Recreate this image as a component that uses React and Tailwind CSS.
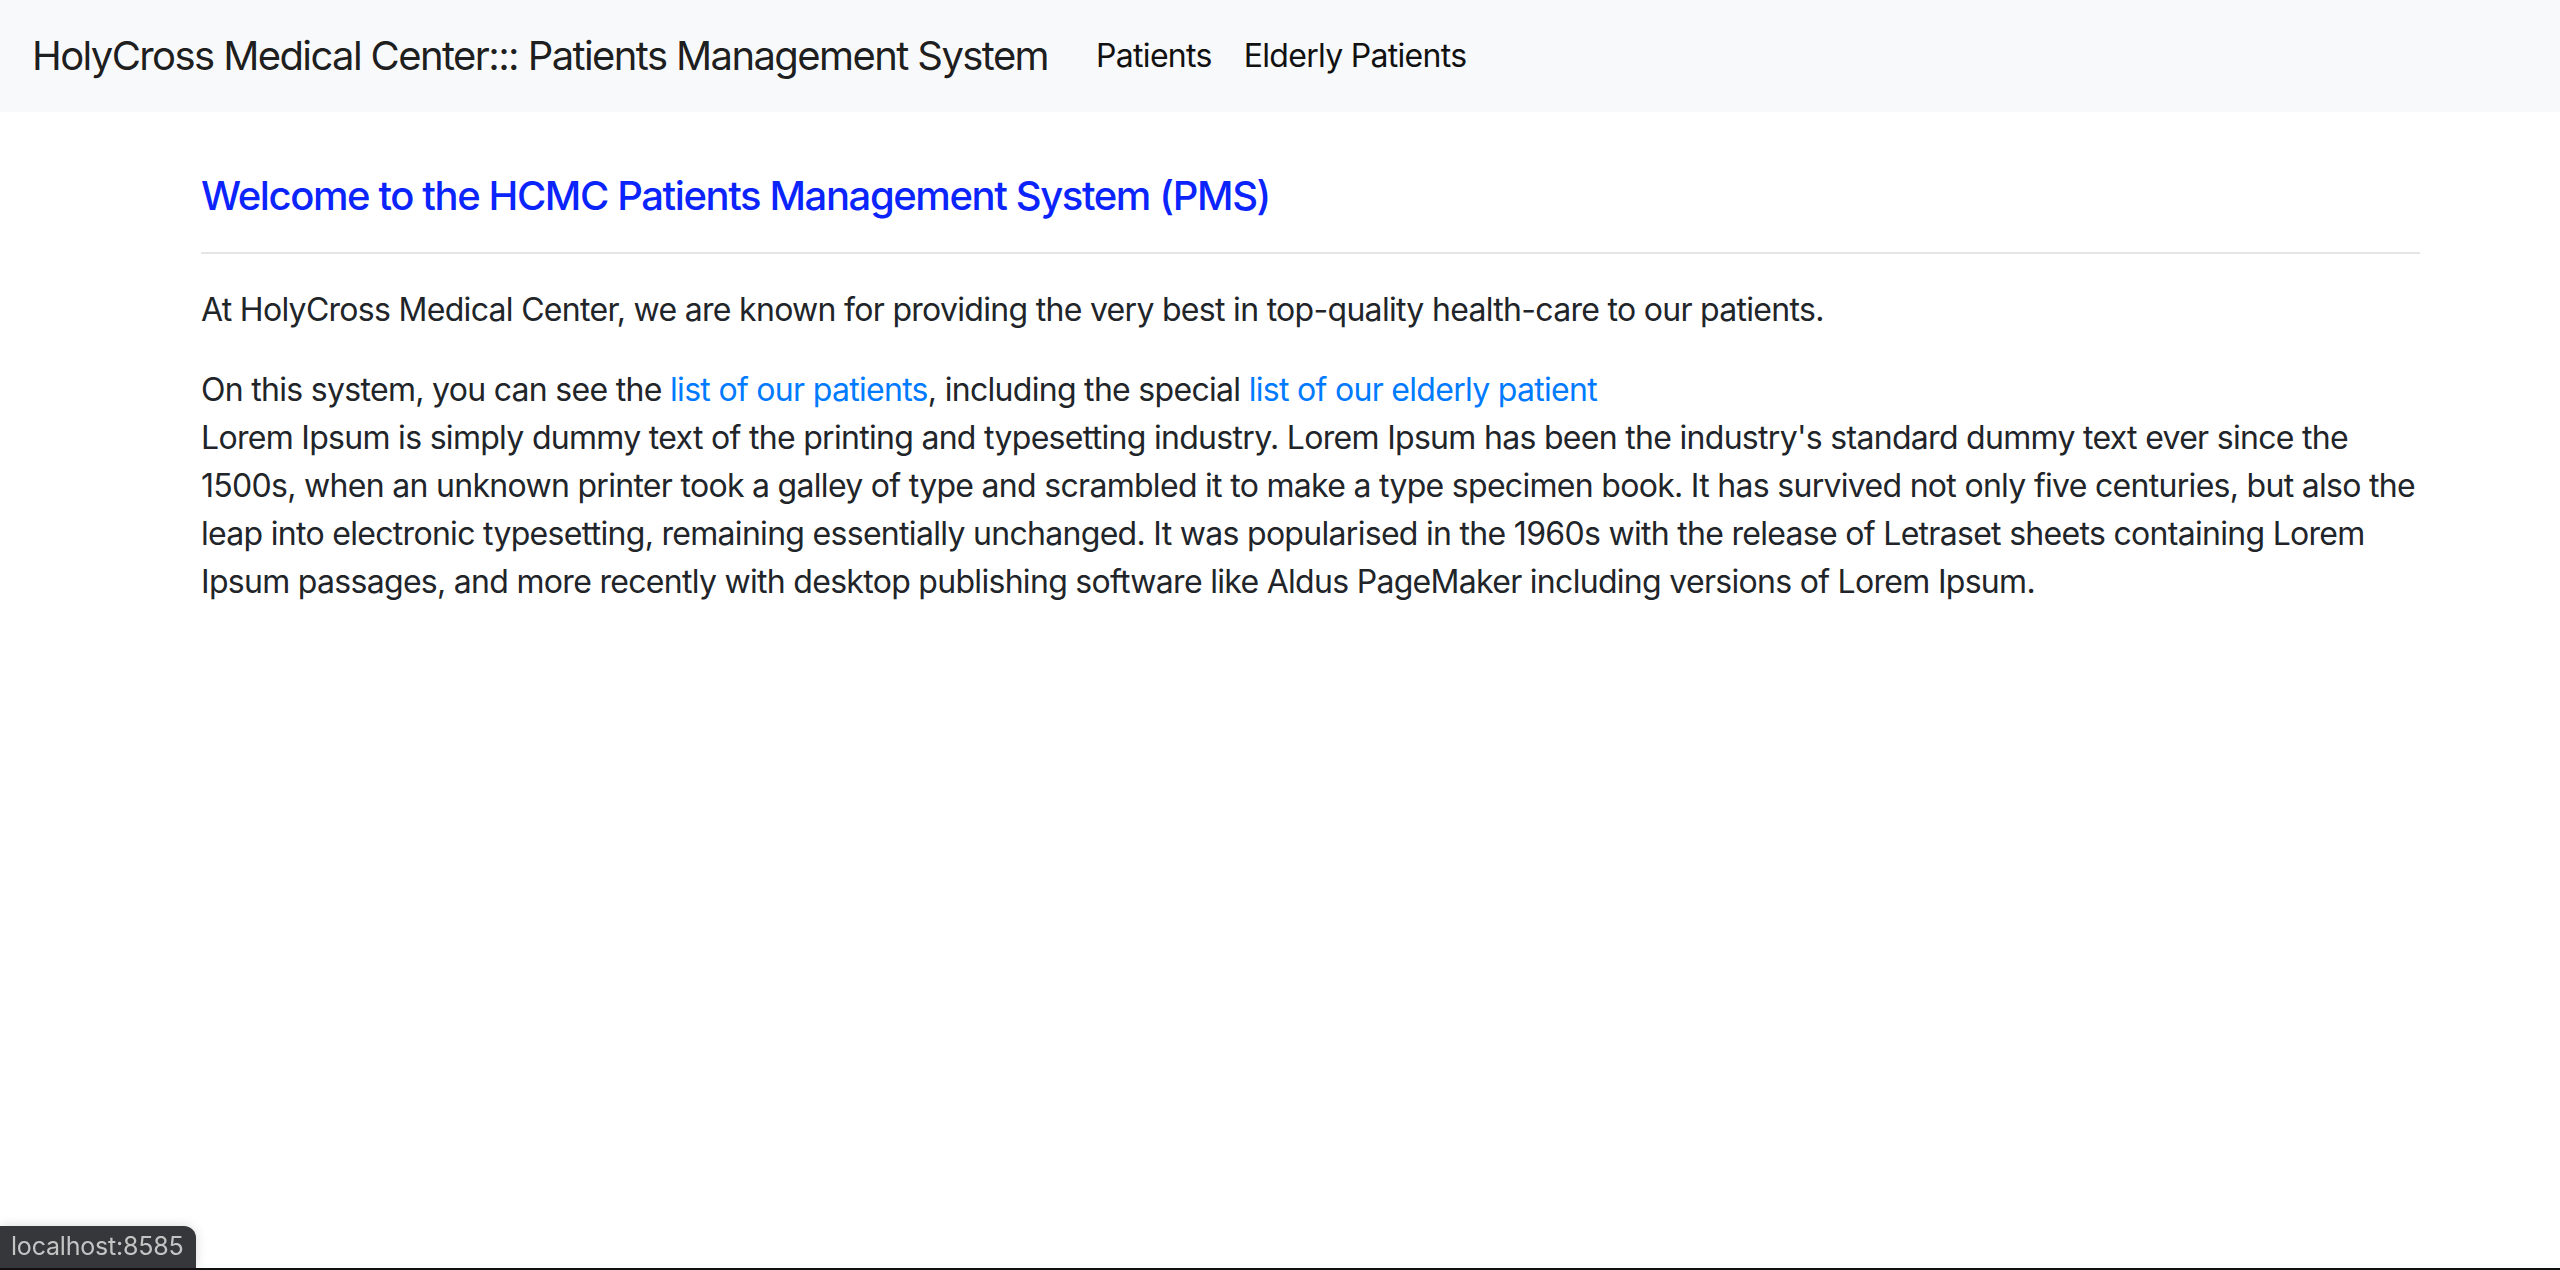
import React from "react";

const NavBar = () => (
  <nav className="h-[112px] bg-[#f8f9fa] px-[32px] flex items-center">
    <a href="#" className="text-[40px] leading-[60px] tracking-[-1.6px] text-[#000000e6] mr-[32px]">
      HolyCross Medical Center::: Patients Management System
    </a>
    <ul className="flex items-center">
      <li>
        <a href="#" className="block px-[16px] text-[32px] leading-[48px] tracking-[-0.7px] text-[#111]">
          Patients
        </a>
      </li>
      <li>
        <a href="#" className="block px-[16px] text-[32px] leading-[48px] tracking-[-0.7px] text-[#111]">
          Elderly Patients
        </a>
      </li>
    </ul>
  </nav>
);

export default function App() {
  return (
    <div className="min-h-[1270px] bg-white text-[#212529] font-['Inter','Liberation_Sans',sans-serif]">
      <NavBar />

      {/* Home content */}
      <main className="ml-[201px] w-[2219px] pt-[60px]">
        <h5 className="text-[40px] leading-[48px] tracking-[-1.4px] font-medium text-[#0b24fb]">
          Welcome to the HCMC Patients Management System (PMS)
        </h5>
        <hr className="mt-[32px] mb-[32px] border-0 h-[2px] bg-[#e5e5e5]" />
        <div className="text-[32px] leading-[48px] tracking-[-0.7px]">
          <p className="mb-[32px]">
            At HolyCross Medical Center, we are known for providing the very best in top-quality health-care to our patients.
          </p>
          <p>
            On this system, you can see the{" "}
            <a href="#" className="text-[#007bff]">list of our patients</a>, including the special{" "}
            <a href="#" className="text-[#007bff]">list of our elderly patient</a>
            <br />
            Lorem Ipsum is simply dummy text of the printing and typesetting industry. Lorem Ipsum has been the
            industry's standard dummy text ever since the 1500s, when an unknown printer took a galley of type and
            scrambled it to make a type specimen book. It has survived not only five centuries, but also the leap into
            electronic typesetting, remaining essentially unchanged. It was popularised in the 1960s with the release of
            Letraset sheets containing Lorem Ipsum passages, and more recently with desktop publishing software like
            Aldus PageMaker including versions of Lorem Ipsum.
          </p>
        </div>
      </main>

      {/* browser status tooltip */}
      <div className="fixed left-0 bottom-[2px] h-[42px] w-[196px] bg-[#36373a] rounded-tr-[12px] flex items-center pl-[11px] text-[25px] tracking-[-0.2px] text-[#c4c4c4] shadow-[0_0_12px_rgba(0,0,0,0.15)]">
        localhost:8585
      </div>
      <div className="fixed left-0 bottom-0 h-[2px] w-full bg-[#111]" />
    </div>
  );
}
